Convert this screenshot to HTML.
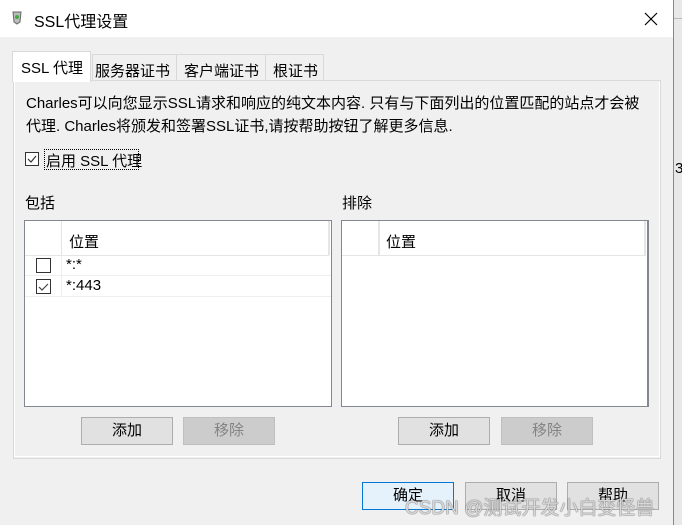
<!DOCTYPE html>
<html><head><meta charset="utf-8"><style>
*{box-sizing:border-box;margin:0;padding:0}
body{width:682px;height:525px;overflow:hidden;background:#f0f0f0;font-family:"Liberation Sans","Noto Sans CJK SC",sans-serif;font-size:15px;color:#000;position:relative}
.abs{position:absolute}
.title{left:0;top:0;width:673px;height:37px;background:#fff}
.btn{position:absolute;height:28px;border:1px solid #adadad;background:#e1e1e1;text-align:center;line-height:25px;font-size:15px}
.list{position:absolute;background:#fff;border:1px solid #828790}
</style></head><body>
<div class="abs" style="left:673px;top:0;width:9px;height:525px;background:#e8e8e8;border-left:1px solid #888"></div>
<div class="abs" style="left:674px;top:18px;width:8px;height:1px;background:#bbb"></div>
<div class="abs" style="left:675px;top:160px;font-size:15px">3</div>
<div class="abs title"></div>
<svg class="abs" style="left:12px;top:11px" width="10" height="14"><path d="M1 1h8l-1 10-3 2-3-2z" fill="#bbb" stroke="#666"/><circle cx="5" cy="6" r="2" fill="#4a4"/></svg>
<div class="abs" style="left:34px;top:8px;font-size:16px">SSL代理设置</div>
<svg class="abs" style="left:644px;top:12px" width="14" height="14"><path d="M1 1L13 13M13 1L1 13" stroke="#000" stroke-width="1.2"/></svg>
<div class="abs" style="left:0;top:37px;width:673px;height:488px;background:#f0f0f0"></div>
<div class="abs" style="left:92px;top:54px;width:232px;height:27px;background:#f0f0f0;border:1px solid #d9d9d9;border-bottom:none"></div>
<div class="abs" style="left:176px;top:55px;width:1px;height:25px;background:#d9d9d9"></div>
<div class="abs" style="left:265px;top:55px;width:1px;height:25px;background:#d9d9d9"></div>
<div class="abs" style="left:13px;top:80px;width:648px;height:379px;border:1px solid #d9d9d9;background:#f0f0f0"></div>
<div class="abs" style="left:12px;top:51px;width:79px;height:31px;background:#fff;border:1px solid #d9d9d9;border-bottom:none"></div>
<div class="abs" style="left:14px;top:82px;width:646px;height:375px;background:#f0f0f0;border:1px solid #fff;border-top:none"></div>
<div class="abs" style="left:21px;top:57px">SSL 代理</div>
<div class="abs" style="left:95px;top:60px">服务器证书</div>
<div class="abs" style="left:184px;top:60px">客户端证书</div>
<div class="abs" style="left:273px;top:60px">根证书</div>
<div class="abs" style="left:26px;top:92px;line-height:23px;width:640px;white-space:nowrap">Charles可以向您显示SSL请求和响应的纯文本内容. 只有与下面列出的位置匹配的站点才会被<br>代理. Charles将颁发和签署SSL证书,请按帮助按钮了解更多信息.</div>
<div class="abs" style="left:44px;top:149px;width:95px;height:21px;border:1px dotted #000"></div>
<div class="abs" style="left:25px;top:152px;width:14px;height:14px;border:1px solid #333;background:#fff"></div>
<svg class="abs" style="left:26px;top:153px" width="12" height="12"><path d="M2 6l3 3 5-6" stroke="#333" fill="none" stroke-width="1.2"/></svg>
<div class="abs" style="left:46px;top:150px">启用 SSL 代理</div>
<div class="abs" style="left:25px;top:192px">包括</div>
<div class="abs" style="left:342px;top:192px">排除</div>
<div class="list" style="left:24px;top:220px;width:308px;height:187px">
 <div class="abs" style="left:36px;top:0;width:1px;height:34px;background:#e5e5e5"></div>
 <div class="abs" style="left:0;top:34px;width:304px;height:1px;background:#e5e5e5"></div>
 <div class="abs" style="left:303px;top:0;width:2px;height:34px;background:#e5e5e5"></div>
 <div class="abs" style="left:44px;top:10px">位置</div>
 <div class="abs" style="left:36px;top:35px;width:1px;height:40px;background:#eee"></div>
 <div class="abs" style="left:0;top:54px;width:306px;height:1px;background:#eee"></div>
 <div class="abs" style="left:0;top:75px;width:306px;height:1px;background:#eee"></div>
 <div class="abs" style="left:11px;top:37px;width:15px;height:15px;border:1px solid #333"></div>
 <div class="abs" style="left:11px;top:58px;width:15px;height:15px;border:1px solid #333"></div>
 <svg class="abs" style="left:12px;top:59px" width="13" height="13"><path d="M2 7l3 3 6-6" stroke="#444" fill="none" stroke-width="1.2"/></svg>
 <div class="abs" style="left:41px;top:35px">*:*</div>
 <div class="abs" style="left:41px;top:56px">*:443</div>
</div>
<div class="list" style="left:341px;top:220px;width:308px;height:187px;border-right-width:2px">
 <div class="abs" style="left:36px;top:0;width:2px;height:34px;background:#e5e5e5"></div>
 <div class="abs" style="left:0;top:34px;width:304px;height:1px;background:#e5e5e5"></div>
 <div class="abs" style="left:302px;top:0;width:2px;height:34px;background:#e5e5e5"></div>
 <div class="abs" style="left:44px;top:10px">位置</div>
</div>
<div class="btn" style="left:81px;top:417px;width:92px">添加</div>
<div class="btn" style="left:183px;top:417px;width:92px;background:#cccccc;border-color:#bfbfbf;color:#838383">移除</div>
<div class="btn" style="left:398px;top:417px;width:92px">添加</div>
<div class="btn" style="left:501px;top:417px;width:92px;background:#cccccc;border-color:#bfbfbf;color:#838383">移除</div>
<div class="btn" style="left:362px;top:482px;width:92px;background:#e5f1fb;border-color:#0078d7">确定</div>
<div class="btn" style="left:465px;top:482px;width:92px">取消</div>
<div class="btn" style="left:567px;top:482px;width:92px">帮助</div>
<div class="abs" style="left:405px;top:493px;font-size:19px;color:#d8d8d8;text-shadow:0 0 1px #666,0 0 1px #666;white-space:nowrap">CSDN @测试开发小白变怪兽</div>
</body></html>
